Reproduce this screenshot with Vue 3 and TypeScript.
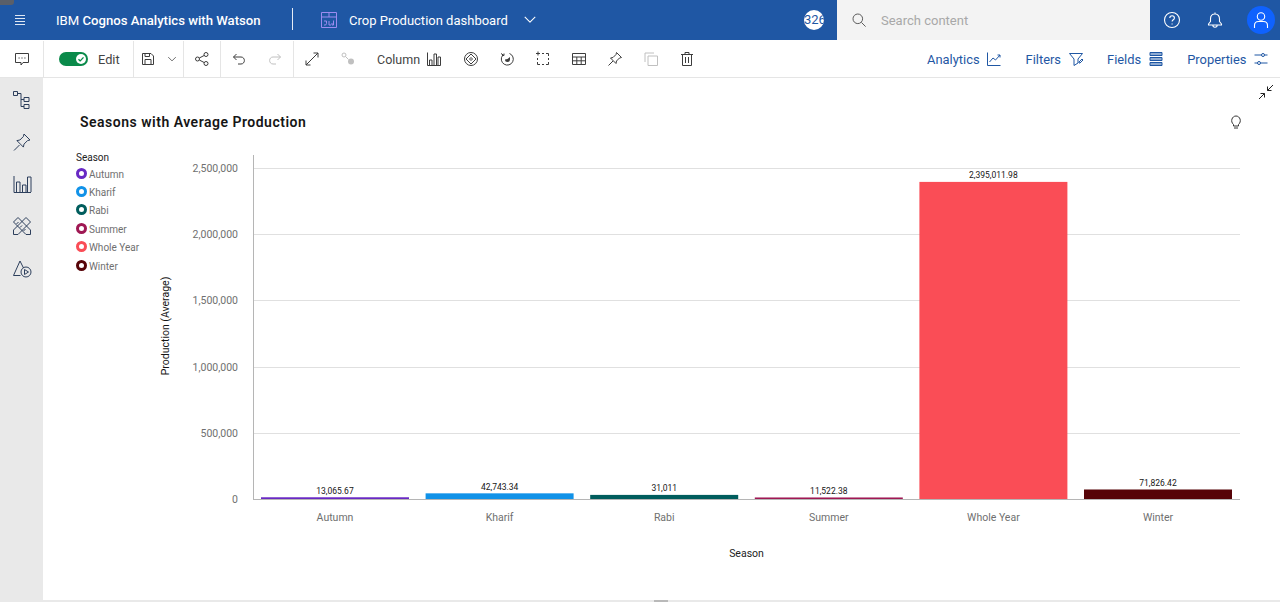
<template>
  <div class="page">
    <span class="corner-tab"></span>
    <header class="topbar">
      <button class="menu-btn">
        <svg class="ic" viewBox="0 0 16 16"><path d="M3 3.500h10M3 6.500h10M3 9.500h10M3 12.500h10" /></svg>
      </button>
      <div class="brand">IBM <b>Cognos Analytics with Watson</b></div>
      <span class="divider"></span>
      <svg class="dash-icon" viewBox="0 0 16 16">
        <path d="M.5.5h15v15H.5zM.5 5h15M8 .5V5M3 9h2.500v2.500q0 1.500-1.500 1.500H3M8 9v4h2M11 11v2h1.500V8.500" />
      </svg>
      <div class="dash-name">Crop Production dashboard</div>
      <svg class="chev" viewBox="0 0 16 16"><path d="M2 4.500l6 6 6-6" /></svg>
      <div class="spacer"></div>
      <div class="badge"><span>326</span></div>
      <div class="search">
        <svg class="ic search-ic" viewBox="0 0 16 16"><circle cx="6.800" cy="6.800" r="4.800" /><path d="M10.400 10.400l4.200 4.200" /></svg>
        <span class="placeholder">Search content</span>
      </div>
      <div class="top-actions">
        <svg class="top-ic" viewBox="0 0 20 20">
          <circle cx="10" cy="10" r="7.500" />
          <path d="M7.800 8c0-3 4.600-3 4.600 0 0 1.800-2.300 1.700-2.300 3.600M10.100 13.400v1" />
        </svg>
        <svg class="top-ic" viewBox="0 0 20 20">
          <path d="M10 2.500V4M10 4c-3 0-4.500 2-4.500 5v2.500L3.500 14v1h13v-1l-2-2.500V9c0-3-1.500-5-4.500-5zM7.800 15c0 3 4.400 3 4.400 0" />
        </svg>
        <div class="avatar">
          <svg class="top-ic" viewBox="0 0 20 20">
            <circle cx="10" cy="6.500" r="3.700" />
            <path d="M3.500 18v-2.500c0-2.500 1.500-4 4-4h5c2.500 0 4 1.500 4 4V18" />
          </svg>
        </div>
      </div>
    </header>

    <div class="toolbar">
      <div class="tool-group chat-group">
        <svg class="ic dark" viewBox="0 0 16 16">
          <path d="M1.500 2.500h13v9H9l-2 2.500v-2.500H1.500zM4.500 7h1.200M7.400 7h1.200M10.300 7h1.200" />
        </svg>
      </div>
      <div class="tool-group edit-group">
        <div class="toggle">
          <span class="knob">
            <svg viewBox="0 0 12 12"><path d="M3 6.200l2.100 2.100L9 4" /></svg>
          </span>
        </div>
        <span class="edit-label">Edit</span>
      </div>
      <div class="tool-group save-group">
        <svg class="ic dark" viewBox="0 0 16 16">
          <path d="M2.500 2.500h8.500l2.500 2.500v8.500h-11zM5 13.500v-5h6v5M5 2.500v3h4.500v-3" />
        </svg>
        <svg class="ic dark small" viewBox="0 0 16 16"><path d="M3 5.500l5 5 5-5" /></svg>
      </div>
      <div class="tool-group share-group">
        <svg class="ic dark" viewBox="0 0 16 16">
          <circle cx="3.500" cy="8" r="2" /><circle cx="12" cy="3.500" r="2" /><circle cx="12" cy="12.500" r="2" />
          <path d="M5.300 7l5-2.600M5.300 9l5 2.600" />
        </svg>
      </div>
      <div class="tool-group undo-group">
        <svg class="ic dark" viewBox="0 0 16 16"><path d="M5.500 3L2.500 6l3 3M2.500 6H10c4.500 0 4.500 7 0 7H7" /></svg>
        <svg class="ic faint" viewBox="0 0 16 16"><path d="M10.500 3l3 3-3 3M13.500 6H6c-4.500 0-4.500 7 0 7h3" /></svg>
      </div>
      <div class="tool-group chart-tools">
        <button class="tool-btn">
          <svg class="ic dark" viewBox="0 0 16 16"><path d="M2 14l12-12M9.500 2H14v4.500M2 9.500V14h4.500" /></svg>
        </button>
        <button class="tool-btn">
          <svg class="ic faint" viewBox="0 0 16 16">
            <circle cx="4" cy="4" r="2" />
            <circle class="solid" cx="11" cy="10.500" r="3" />
            <path d="M5.500 5.500l3 3" />
          </svg>
        </button>
        <div class="column-pick">
          <span>Column</span>
          <svg class="ic dark" viewBox="0 0 16 16"><path d="M1.500 1.500v13h13M3.500 14.500V9h2.500v5.500M8 14.500V3h2.500v11.500M12 14.500V6h2.500v8.500" /></svg>
        </div>
        <button v-for="tool in chartTools" :key="tool.name" class="tool-btn">
          <svg class="ic" :class="tool.tone" viewBox="0 0 16 16">
            <path :d="tool.d" />
            <path v-if="tool.name === 'sync'" class="solid" d="M6 8.500a2.500 2.500 0 0 0 5 0V6L8.500 8z" />
          </svg>
        </button>
      </div>
      <div class="spacer"></div>
      <div class="panels">
        <div v-for="panel in panels" :key="panel.label" class="panel-link">
          <span>{{ panel.label }}</span>
          <svg class="ic blue" viewBox="0 0 16 16"><path :d="panel.d" /></svg>
        </div>
      </div>
    </div>

    <div class="workspace">
      <aside class="rail">
        <svg v-for="item in railIcons" :key="item.name" class="rail-ic" viewBox="0 0 20 20"><path :d="item.d" /></svg>
      </aside>
      <main class="canvas">
        <svg class="collapse" viewBox="0 0 16 16">
          <path d="M15 1L9.500 6.500M9.500 2.500v4h4M1 15l5.500-5.500M2.500 9.500h4v4" />
        </svg>
        <svg class="bulb" viewBox="0 0 16 16">
          <path d="M5.500 10.500C2 7.500 4 2 8 2s6 5.500 2.500 8.500v1.500h-5zM6 14h4" />
        </svg>
        <h1 class="chart-title">Seasons with Average Production</h1>
        <div class="chart-body">
          <div class="legend">
            <div class="legend-title">Season</div>
            <div v-for="row in seasons" :key="row.name" class="legend-row">
              <span class="dot" :style="{ borderColor: row.color }"></span>
              <span>{{ row.name }}</span>
            </div>
          </div>
          <svg class="plot" viewBox="0 0 1197 460" width="1197" height="460">
            <text class="axis-title" transform="translate(126 196) rotate(-90)" text-anchor="middle">Production (Average)</text>
            <g v-for="tick in ticks" :key="tick.label">
              <line class="grid" :x1="210" :x2="1197" :y1="tick.y" :y2="tick.y" />
              <text class="tick" x="195" :y="tick.y + 3.500" text-anchor="end">{{ tick.label }}</text>
            </g>
            <line class="axis" x1="210.500" x2="210.500" y1="25" :y2="baseY" />
            <line class="axis" x1="210" x2="1197" :y1="baseY + 0.5" :y2="baseY + 0.5" />
            <g v-for="bar in bars" :key="bar.name">
              <rect :x="bar.x" :y="bar.y" :width="bar.w" :height="bar.h" :fill="bar.color" />
              <text class="value" :x="bar.cx" :y="bar.y - 3.500" text-anchor="middle">{{ bar.value }}</text>
              <text class="cat" :x="bar.cx" y="391" text-anchor="middle">{{ bar.name }}</text>
            </g>
          </svg>
        </div>
        <div class="x-title">Season</div>
      </main>
    </div>
    <div class="bottom-strip"><span></span></div>
  </div>
</template>

<script setup lang="ts">
import { computed } from 'vue'

interface Season {
  name: string
  value: number
  label: string
  color: string
}

const seasons: Season[] = [
  { name: 'Autumn', value: 13065.67, label: '13,065.67', color: '#6929c4' },
  { name: 'Kharif', value: 42743.34, label: '42,743.34', color: '#1192e8' },
  { name: 'Rabi', value: 31011, label: '31,011', color: '#005d5d' },
  { name: 'Summer', value: 11522.38, label: '11,522.38', color: '#9f1853' },
  { name: 'Whole Year', value: 2395011.98, label: '2,395,011.98', color: '#fa4d56' },
  { name: 'Winter', value: 71826.42, label: '71,826.42', color: '#570408' },
]

const baseY = 369
const plotHeight = 331
const maxValue = 2500000

const ticks = [0, 500000, 1000000, 1500000, 2000000, 2500000].map((v) => ({
  label: v.toLocaleString('en-US'),
  y: Math.round(baseY - (v / maxValue) * plotHeight) + 0.5,
}))

const bars = computed(() =>
  seasons.map((s, i) => {
    const h = (s.value / maxValue) * plotHeight
    const x = 218 + i * 164.6
    return { name: s.name, color: s.color, value: s.label, x, w: 148, h, y: baseY - h, cx: x + 74 }
  }),
)

const chartTools = [
  { name: 'style', tone: 'dark', d: 'M8 1.500a6.500 6.500 0 1 0 0 13a6.500 6.500 0 1 0 0-13M8 3l5 5-5 5-5-5zM8 6.500l1.500 1.500-1.500 1.500-1.500-1.500z' },
  { name: 'sync', tone: 'dark', d: 'M2 2.500l3 2M5 2.500v2H3M3.500 4.500a6 6 0 1 0 7-2' },
  { name: 'select', tone: 'dark', d: 'M3 .500v4M1 2.500h4M7 2.500h2M11 2.500h2.500V5M13.500 7v2M13.500 11v2.500H11M9 13.500H7M5 13.500H2.500V11M2.500 9V7' },
  { name: 'table', tone: 'dark', d: 'M1.500 2.500h13v11h-13zM1.500 6h13M1.500 9.800h13M5.800 6v7.500M10.200 6v7.500' },
  { name: 'pin', tone: 'dark', d: 'M1.500 14.500L6 10M9.500 1.500l5 5-2 .500-3 3-.500 2.500-5.500-5.500 2.500-.500 3-3z' },
  { name: 'copy', tone: 'faint', d: 'M2 11V2h9M5 5h9.500v9.500H5z' },
  { name: 'trash', tone: 'dark', d: 'M2 3.500h12M6 3.500V1.500h4v2M3.500 3.500v11h9v-11M6.500 6v6M9.500 6v6' },
]

const panels = [
  { label: 'Analytics', d: 'M1.500 1.500v13h13M3.500 11l3.500-4 2.500 2 4.500-5M11.500 4h2.500v2.500' },
  { label: 'Filters', d: 'M1.500 2.500h13L10 8v4l-4 2.500V8zM11 11l3-3 1 1-3 3h-1z' },
  { label: 'Fields', d: 'M2 1.500h12v3H2zM2 6.500h12v3H2zM2 11.500h12v3H2zM2 3h12M2 8h12M2 13h12' },
  { label: 'Properties', d: 'M1.500 4h7M11.500 4h3M1.500 12h3M7.500 12h7M8.500 4a1.500 1.500 0 1 0 3 0a1.500 1.500 0 1 0-3 0M4.500 12a1.500 1.500 0 1 0 3 0a1.500 1.500 0 1 0-3 0' },
]

const railIcons = [
  { name: 'tree', d: 'M1.500 1.500h4v4h-4zM5.500 3.500h3.500v13h3M9 9.500h3M12 7.500h5v4h-5zM12 14.500h5v4h-5z' },
  { name: 'pin', d: 'M2 18.500L7.500 13M12 2l6 6-2.500.600-3.500 3.500-.600 3-6.500-6.500 3-.600 3.500-3.500z' },
  { name: 'bars', d: 'M2 2v16.500h17M4.500 18V8h3.500v10M10.500 18v-7H14v7M15.500 18V3h3.500v15' },
  { name: 'tools', d: 'M6 1.500L1.500 6 14 18.500h4.500V14zM4.500 8l2-2M8 11.500l2-2M11.500 15l2-2M14 1.500L1.500 14v4.500H6L18.500 6z' },
  { name: 'shapes', d: 'M1.500 17.500L8 3l3.500 7M1.500 17.500h7M14 9a5 5 0 1 0 0 10a5 5 0 1 0 0-10M12.500 11.500v5l4-2.500z' },
]
</script>

<style>
html,
body {
  margin: 0;
  background: #fff;
  overflow: hidden;
}
</style>

<style scoped>
.page {
  position: relative;
  display: flex;
  flex-direction: column;
  height: 602px;
  width: 1280px;
  overflow: hidden;
  font-family: Roboto, "Liberation Sans", sans-serif;
  color: #161616;
}

.corner-tab {
  position: absolute;
  top: 0;
  left: 0;
  width: 14px;
  height: 5px;
  border-radius: 0 0 3px 0;
  background: #5a5f69;
  z-index: 2;
}

svg {
  fill: none;
  stroke-linejoin: round;
}

.ic {
  width: 16px;
  height: 16px;
  flex: none;
  stroke: currentColor;
  stroke-width: 1;
}

.ic.dark { color: #3d3d3d; }
.ic.faint { color: #c0c0c0; }
.ic.blue { color: #1f57a4; }
.ic.small { width: 12px; height: 12px; }

.solid {
  fill: currentColor;
  stroke: none;
}

/* top bar */
.topbar {
  display: flex;
  align-items: center;
  height: 40px;
  flex: none;
  background: #1f57a4;
  color: #fff;
}

.menu-btn {
  display: flex;
  justify-content: center;
  width: 40px;
  padding: 0;
  border: 0;
  background: none;
  color: #dfe8f4;
}

.brand {
  margin-left: 16px;
  width: 236px;
  font-size: 13.150px;
  white-space: nowrap;
}

.brand b { font-weight: 500; }

.divider {
  width: 1px;
  height: 22px;
  margin-bottom: 3px;
  background: #e6ecf5;
}

.dash-icon {
  width: 16px;
  height: 16px;
  margin-left: 28px;
  stroke: #9c8cf0;
  stroke-width: 1;
}

.dash-name {
  margin-left: 12px;
  font-size: 13px;
  width: 158px;
  white-space: nowrap;
}

.chev {
  width: 14px;
  height: 14px;
  margin-left: 16px;
  stroke: #fff;
  stroke-width: 1.200;
}

.spacer { flex: 1; }

.badge {
  width: 20px;
  height: 20px;
  margin-right: 13px;
  border-radius: 50%;
  background: #fff;
  overflow: hidden;
  color: #1f57a4;
  font-size: 13px;
  line-height: 20px;
  white-space: nowrap;
}

.search {
  display: flex;
  align-items: center;
  width: 313px;
  height: 40px;
  background: #f3f3f3;
  color: #5c5c5c;
}

.search-ic { margin-left: 14px; }

.placeholder {
  margin-left: 14px;
  font-size: 13px;
  color: #a8a8a8;
}

.top-actions {
  display: flex;
  align-items: center;
  width: 130px;
  height: 40px;
  padding-left: 12px;
  box-sizing: border-box;
  gap: 23px;
}

.top-ic {
  width: 20px;
  height: 20px;
  stroke: #fff;
  stroke-width: 1.100;
}

.avatar {
  display: flex;
  align-items: center;
  justify-content: center;
  width: 28px;
  height: 28px;
  margin-left: -1px;
  border-radius: 50%;
  background: #0f62fe;
}

/* toolbar */
.toolbar {
  display: flex;
  align-items: stretch;
  height: 38px;
  flex: none;
  box-sizing: border-box;
  border-bottom: 1px solid #e5e5e5;
  padding-top: 1px;
  background: #fff;
}

.tool-group {
  display: flex;
  align-items: center;
  box-sizing: border-box;
  border-right: 1px solid #e5e5e5;
}

.chat-group { width: 44px; justify-content: center; }
.edit-group { width: 90px; padding-left: 15px; }
.save-group { width: 50px; padding-left: 6px; gap: 10px; }
.share-group { width: 37px; justify-content: center; }
.undo-group { width: 73px; padding-left: 10px; gap: 20px; }
.chart-tools { border-right: 0; }

.toggle {
  display: flex;
  align-items: center;
  justify-content: flex-end;
  width: 29px;
  height: 14px;
  padding-right: 2px;
  box-sizing: border-box;
  border-radius: 7px;
  background: #0a8a4a;
}

.knob {
  width: 10px;
  height: 10px;
  border-radius: 50%;
  background: #fff;
}

.knob svg {
  display: block;
  stroke: #0a8a4a;
  stroke-width: 1.600;
}

.edit-label {
  margin-left: 10px;
  font-size: 12.800px;
  color: #444;
}

.tool-btn {
  display: flex;
  align-items: center;
  justify-content: center;
  width: 36px;
  height: 36px;
  padding: 0;
  border: 0;
  background: none;
}

.column-pick {
  display: flex;
  align-items: center;
  gap: 6px;
  margin-left: 11px;
  margin-right: 11px;
  font-size: 12.500px;
  color: #444;
}

.panels {
  display: flex;
  align-items: center;
  gap: 23.500px;
  padding-right: 11px;
}

.panel-link {
  display: flex;
  align-items: center;
  gap: 6.500px;
  font-size: 12.900px;
  color: #1f57a4;
}

/* workspace */
.workspace {
  display: flex;
  flex: 1;
  min-height: 0;
}

.rail {
  display: flex;
  flex-direction: column;
  align-items: center;
  gap: 22px;
  width: 43px;
  flex: none;
  padding-top: 12px;
  box-sizing: border-box;
  background: #e9e9e9;
}

.rail-ic {
  width: 20px;
  height: 20px;
  stroke: #2d3f5c;
  stroke-width: 1;
}

.canvas {
  position: relative;
  flex: 1;
  background: #fff;
}

.collapse {
  position: absolute;
  top: 6px;
  right: 6px;
  width: 16px;
  height: 16px;
  stroke: #222;
  stroke-width: 1;
}

.bulb {
  position: absolute;
  top: 36px;
  right: 36px;
  width: 16px;
  height: 16px;
  stroke: #333;
  stroke-width: 1;
}

.chart-title {
  margin: 0;
  padding: 36px 0 0 37px;
  font-size: 14px;
  line-height: 16px;
  font-weight: 600;
  letter-spacing: 0.500px;
  color: #161616;
}

.chart-body {
  position: relative;
  height: 460px;
}

.legend {
  position: absolute;
  top: 21px;
  left: 33px;
  font-size: 10px;
  color: #6f6f6f;
}

.legend-title {
  color: #222;
  line-height: 14px;
}

.legend-row {
  display: flex;
  align-items: center;
  gap: 2px;
  height: 18.400px;
}

.dot {
  width: 5px;
  height: 5px;
  border: 3px solid;
  border-radius: 50%;
  margin-top: -2px;
}

.plot {
  display: block;
  font-family: Roboto, "Liberation Sans", sans-serif;
}

.grid {
  stroke: #e0e0e0;
  stroke-width: 1;
}

.axis {
  stroke: #b5b5b5;
  stroke-width: 1;
}

.tick,
.cat {
  font-size: 10.500px;
  fill: #6f6f6f;
  stroke: none;
}

.value {
  font-size: 8.500px;
  fill: #161616;
  stroke: none;
}

.axis-title {
  font-size: 10.500px;
  fill: #161616;
  stroke: none;
}

.x-title {
  position: absolute;
  top: 469px;
  left: 0;
  width: 1407px;
  text-align: center;
  font-size: 10.500px;
  color: #222;
}

.bottom-strip {
  position: absolute;
  left: 0;
  right: 0;
  bottom: 0;
  height: 2px;
  background: #e9e9e9;
}

.bottom-strip span {
  position: absolute;
  left: 654px;
  bottom: 0;
  width: 14px;
  height: 2px;
  background: #b9b9b9;
}
</style>
